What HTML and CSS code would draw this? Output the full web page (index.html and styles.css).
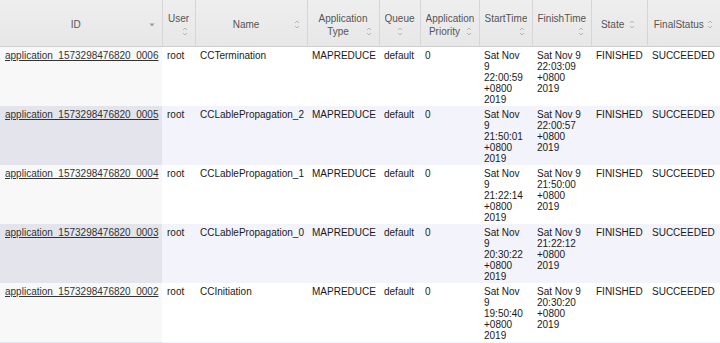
FILE: index.html
```html
<!DOCTYPE html>
<html>
<head>
<meta charset="utf-8">
<link rel="stylesheet" href="styles.css">
</head>
<body>
<table class="apps">
  <colgroup>
    <col class="c-id"><col class="c-user"><col class="c-name"><col class="c-type"><col class="c-queue"><col class="c-prio"><col class="c-start"><col class="c-finish"><col class="c-state"><col class="c-final">
  </colgroup>
  <thead>
    <tr>
      <th><div class="sw">ID<span class="si"><svg width="10" height="13" viewBox="0 0 10 13"><path d="M2.5 5.5 L7.5 5.5 L5 8.5 Z" fill="#9a9a9a"/></svg></span></div></th>
      <th><div class="sw">User<span class="si"><svg width="10" height="13" viewBox="0 0 10 13"><path d="M3 5 L5 3 L7 5 M3 8 L5 10 L7 8" fill="none" stroke="#b4b4b4" stroke-width="1"/></svg></span></div></th>
      <th><div class="sw">Name<span class="si"><svg width="10" height="13" viewBox="0 0 10 13"><path d="M3 5 L5 3 L7 5 M3 8 L5 10 L7 8" fill="none" stroke="#b4b4b4" stroke-width="1"/></svg></span></div></th>
      <th><div class="sw">Application Type<span class="si"><svg width="10" height="13" viewBox="0 0 10 13"><path d="M3 5 L5 3 L7 5 M3 8 L5 10 L7 8" fill="none" stroke="#b4b4b4" stroke-width="1"/></svg></span></div></th>
      <th><div class="sw">Queue <span class="si si-inline"><svg width="10" height="13" viewBox="0 0 10 13"><path d="M3 5 L5 3 L7 5 M3 8 L5 10 L7 8" fill="none" stroke="#b4b4b4" stroke-width="1"/></svg></span></div></th>
      <th><div class="sw">Application Priority<span class="si"><svg width="10" height="13" viewBox="0 0 10 13"><path d="M3 5 L5 3 L7 5 M3 8 L5 10 L7 8" fill="none" stroke="#b4b4b4" stroke-width="1"/></svg></span></div></th>
      <th><div class="sw">StartTime<span class="si"><svg width="10" height="13" viewBox="0 0 10 13"><path d="M3 5 L5 3 L7 5 M3 8 L5 10 L7 8" fill="none" stroke="#b4b4b4" stroke-width="1"/></svg></span></div></th>
      <th><div class="sw">FinishTime<span class="si"><svg width="10" height="13" viewBox="0 0 10 13"><path d="M3 5 L5 3 L7 5 M3 8 L5 10 L7 8" fill="none" stroke="#b4b4b4" stroke-width="1"/></svg></span></div></th>
      <th><div class="sw">State <span class="si si-inline"><svg width="10" height="13" viewBox="0 0 10 13"><path d="M3 5 L5 3 L7 5 M3 8 L5 10 L7 8" fill="none" stroke="#b4b4b4" stroke-width="1"/></svg></span></div></th>
      <th><div class="sw">FinalStatus<span class="si"><svg width="10" height="13" viewBox="0 0 10 13"><path d="M3 5 L5 3 L7 5 M3 8 L5 10 L7 8" fill="none" stroke="#b4b4b4" stroke-width="1"/></svg></span></div></th>
    </tr>
  </thead>
  <tbody>
    <tr class="odd">
      <td class="sorted"><a href="#">application_1573298476820_0006</a></td>
      <td>root</td>
      <td>CCTermination</td>
      <td>MAPREDUCE</td>
      <td>default</td>
      <td>0</td>
      <td class="time">Sat Nov 9 22:00:59 +0800 2019</td>
      <td>Sat Nov 9 22:03:09 +0800 2019</td>
      <td>FINISHED</td>
      <td>SUCCEEDED</td>
    </tr>
    <tr class="even">
      <td class="sorted"><a href="#">application_1573298476820_0005</a></td>
      <td>root</td>
      <td>CCLablePropagation_2</td>
      <td>MAPREDUCE</td>
      <td>default</td>
      <td>0</td>
      <td class="time">Sat Nov 9 21:50:01 +0800 2019</td>
      <td>Sat Nov 9 22:00:57 +0800 2019</td>
      <td>FINISHED</td>
      <td>SUCCEEDED</td>
    </tr>
    <tr class="odd">
      <td class="sorted"><a href="#">application_1573298476820_0004</a></td>
      <td>root</td>
      <td>CCLablePropagation_1</td>
      <td>MAPREDUCE</td>
      <td>default</td>
      <td>0</td>
      <td class="time">Sat Nov 9 21:22:14 +0800 2019</td>
      <td>Sat Nov 9 21:50:00 +0800 2019</td>
      <td>FINISHED</td>
      <td>SUCCEEDED</td>
    </tr>
    <tr class="even">
      <td class="sorted"><a href="#">application_1573298476820_0003</a></td>
      <td>root</td>
      <td>CCLablePropagation_0</td>
      <td>MAPREDUCE</td>
      <td>default</td>
      <td>0</td>
      <td class="time">Sat Nov 9 20:30:22 +0800 2019</td>
      <td>Sat Nov 9 21:22:12 +0800 2019</td>
      <td>FINISHED</td>
      <td>SUCCEEDED</td>
    </tr>
    <tr class="odd">
      <td class="sorted"><a href="#">application_1573298476820_0002</a></td>
      <td>root</td>
      <td>CCInitiation</td>
      <td>MAPREDUCE</td>
      <td>default</td>
      <td>0</td>
      <td class="time">Sat Nov 9 19:50:40 +0800 2019</td>
      <td>Sat Nov 9 20:30:20 +0800 2019</td>
      <td>FINISHED</td>
      <td>SUCCEEDED</td>
    </tr>
    <tr class="even">
      <td class="sorted"></td>
      <td></td>
      <td></td>
      <td></td>
      <td></td>
      <td></td>
      <td></td>
      <td></td>
      <td></td>
      <td></td>
    </tr>
  </tbody>
</table>
</body>
</html>
```

FILE: styles.css
```css
html, body {
  margin: 0;
  padding: 0;
  background: #ffffff;
}

.apps {
  width: 720px;
  table-layout: fixed;
  border-collapse: collapse;
  font-family: "Liberation Sans", Arial, Helvetica, sans-serif;
  font-size: 10px;
  color: #1a1a1a;
}

.c-id { width: 162px; }
.c-user { width: 33px; }
.c-name { width: 112px; }
.c-type { width: 72px; }
.c-queue { width: 41px; }
.c-prio { width: 59px; }
.c-start { width: 53px; }
.c-finish { width: 59px; }
.c-state { width: 56px; }
.c-final { width: 73px; }

.apps thead tr {
  height: 46px;
}

.apps th {
  font-weight: normal;
  color: #555555;
  text-align: center;
  vertical-align: middle;
  line-height: 13px;
  padding: 4px 5px 0 5px;
  background: linear-gradient(#eeeeee, #e7e7e7);
  border-right: 1px solid #d6d6d6;
  border-bottom: 1px solid #cfcfcf;
}

.apps th:last-child {
  border-right: none;
}

.sw {
  overflow: hidden;
}

.si {
  float: right;
  width: 10px;
  height: 13px;
}

.si.si-inline {
  float: none;
  display: inline-block;
  vertical-align: top;
}

.si svg {
  display: block;
}

.apps td {
  vertical-align: top;
  padding: 3px 6px 0 5px;
  line-height: 11.2px;
  height: 56px;
  overflow: visible;
}

.apps tr.odd {
  background: #ffffff;
}

.apps tr.even {
  background: #f2f3fb;
}

.apps tr.odd td.sorted {
  background: #f8f8f8;
}

.apps tr.even td.sorted {
  background: #e3e4ec;
}

.apps td a {
  color: #333333;
  text-decoration: underline;
}
```
